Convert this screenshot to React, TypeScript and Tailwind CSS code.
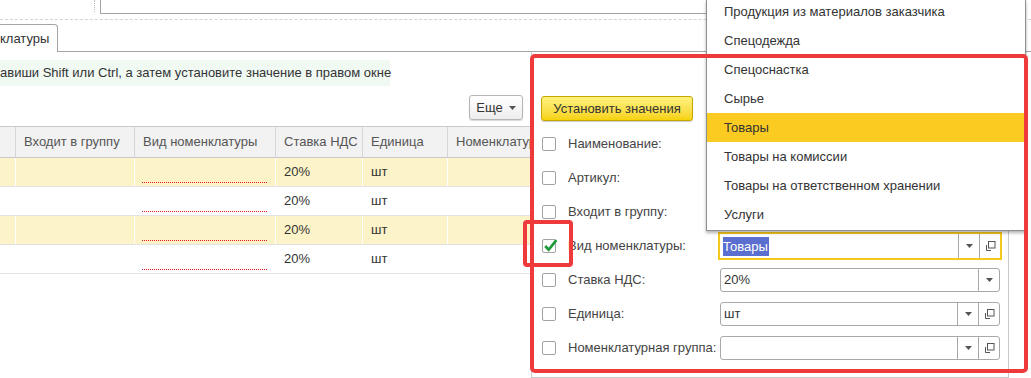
import React from 'react';

const columns = [
  { title: '', w: 'w-[16px]' },
  { title: 'Входит в группу', w: 'w-[119px]' },
  { title: 'Вид номенклатуры', w: 'w-[141px]' },
  { title: 'Ставка НДС', w: 'w-[87px]' },
  { title: 'Единица', w: 'w-[85px]' },
  { title: 'Номенклатур', w: 'flex-1' },
];

const rows = [true, false, true, false];

const listItems = [
  'Продукция из материалов заказчика',
  'Спецодежда',
  'Спецоснастка',
  'Сырье',
  'Товары',
  'Товары на комиссии',
  'Товары на ответственном хранении',
  'Услуги',
];

const Triangle = () => (
  <svg width="7" height="4" viewBox="0 0 7 4">
    <path d="M0 0h7L3.5 4z" fill="#555" />
  </svg>
);

const OpenIcon = () => (
  <svg width="11" height="11" viewBox="0 0 11 11" fill="none" stroke="#555" strokeWidth="1">
    <rect x="3.5" y="0.5" width="6.5" height="6.5" />
    <path d="M1.5 4v5.5H6" />
  </svg>
);

const Checkbox = ({ checked }: { checked?: boolean }) => (
  <div className="w-[14px] h-[14px] border border-[#a3a3a3] rounded-[2px] bg-white relative shrink-0">
    {checked && (
      <svg className="absolute -left-[1px] -top-[3px]" width="17" height="17" viewBox="0 0 16 16">
        <path d="M3 8.5l3.3 3.5L13.5 3" fill="none" stroke="#1f9a3c" strokeWidth="2.6" />
      </svg>
    )}
  </div>
);

type FieldProps = { value?: string; open?: boolean; active?: boolean };

const Field = ({ value, open = true, active }: FieldProps) => (
  <div
    className={
      active
        ? 'w-[284px] h-[28px] -ml-[2px] border-2 border-[#f7c81c] flex bg-white'
        : 'w-[280px] h-[24px] border border-[#a9a9a9] rounded-[3px] flex bg-white'
    }
  >
    <div className="flex-1 flex items-center pl-[3px] text-[#333]">
      {active ? <span className="bg-[#5a6fcf] text-white leading-[19px] pr-[1px]">{value}</span> : value}
    </div>
    <div className="w-[21px] border-l border-[#a9a9a9] flex items-center justify-center">
      <Triangle />
    </div>
    {open && (
      <div className="w-[21px] border-l border-[#a9a9a9] flex items-center justify-center">
        <OpenIcon />
      </div>
    )}
  </div>
);

const fields: { label: string; checked?: boolean; field?: FieldProps }[] = [
  { label: 'Наименование:' },
  { label: 'Артикул:' },
  { label: 'Входит в группу:' },
  { label: 'Вид номенклатуры:', checked: true, field: { value: 'Товары', active: true } },
  { label: 'Ставка НДС:', field: { value: '20%', open: false } },
  { label: 'Единица:', field: { value: 'шт' } },
  { label: 'Номенклатурная группа:', field: { value: '' } },
];

export default function App() {
  return (
    <div className="w-[1031px] h-[378px] relative overflow-hidden bg-white font-['Liberation_Sans',Arial,sans-serif] text-[13px] text-[#4a4a4a]">
      {/* top strip */}
      <div className="h-[20px] flex border-b border-dashed border-[#d4d4d4]">
        <div className="w-[95px] h-[12px] border-r border-dotted border-[#bdbdbd]" />
        <div className="ml-[5px] w-[620px] h-[14px] border-l border-b border-[#a5a5a5]" />
      </div>

      {/* tabs */}
      <div className="mt-[4px] flex h-[28px]">
        <div className="w-[58px] h-[28px] border-t border-r border-[#a5a5a5] rounded-tr-[4px] flex items-center text-[#333] bg-white">
          клатуры
        </div>
        <div className="flex-1 border-b border-[#a5a5a5]" />
      </div>

      <div className="flex">
        {/* left side */}
        <div className="w-[531px]">
          <div className="mt-[8px] w-[390px] h-[26px] bg-[#f1f9f3] flex items-center text-[#333] whitespace-nowrap">
            авиши Shift или Ctrl, а затем установите значение в правом окне
          </div>

          <div className="mt-[9px] h-[25px] flex justify-end pr-[8px]">
            <div className="w-[54px] h-[25px] border border-[#b5b5b5] rounded-[3px] bg-gradient-to-b from-white to-[#eeeeee] shadow-[0_1px_1px_rgba(0,0,0,0.15)] flex items-center justify-center gap-[6px] text-[#333]">
              Еще
              <Triangle />
            </div>
          </div>

          {/* table */}
          <div className="mt-[6px]">
            <div className="h-[32px] flex border-t border-b border-[#c9c9c9] bg-[#f2f2f2]">
              {columns.map((c, i) => (
                <div
                  key={i}
                  className={`${c.w} h-full border-r border-[#d6d6d6] flex items-center pl-[8px] text-[#555] whitespace-nowrap overflow-hidden`}
                >
                  {c.title}
                </div>
              ))}
            </div>
            {rows.map((yellow, r) => (
              <div
                key={r}
                className={`h-[29px] flex border-b border-[#e3e3e3] ${yellow ? 'bg-[#fdf3c8]' : 'bg-white'}`}
              >
                <div className="w-[16px] border-r border-white" />
                <div className="w-[119px] border-r border-white" />
                <div className="w-[141px] border-r border-white flex flex-col justify-end pb-[3px]">
                  <div className="ml-[7px] w-[125px] border-b border-dotted border-[#e8161b]" />
                </div>
                <div className="w-[87px] border-r border-white flex items-center pl-[8px] text-[#333]">20%</div>
                <div className="w-[85px] border-r border-white flex items-center pl-[8px] text-[#333]">шт</div>
                <div className="flex-1" />
              </div>
            ))}
          </div>
        </div>

        {/* right panel */}
        <div className="w-[500px] h-[326px] border-l border-[#c9c9c9]">
          <div className="w-[477px] h-[326px] border-r border-b border-[#c9c9c9] pt-[44px] pl-[9px]">
            <div className="w-[152px] h-[25px] border border-[#c8a600] rounded-[3px] bg-gradient-to-b from-[#fff27a] to-[#f6d200] shadow-[0_1px_1px_rgba(0,0,0,0.2)] flex items-center justify-center text-[#333]">
              Установить значения
            </div>
            <div className="mt-[6px]">
              {fields.map((f) => (
                <div key={f.label} className="h-[34px] flex items-center pl-[1px]">
                  <Checkbox checked={f.checked} />
                  <div className="ml-[12px] w-[152px] whitespace-nowrap text-[#444]">{f.label}</div>
                  {f.field && <Field {...f.field} />}
                </div>
              ))}
            </div>
          </div>
        </div>
      </div>

      {/* open dropdown list */}
      <div className="absolute left-[706px] top-0 w-[320px] h-[231px] bg-white border border-[#8f8f8f] border-t-0 shadow-[0_2px_3px_rgba(0,0,0,0.3)] overflow-hidden">
        <div className="-mt-[3px]">
          {listItems.map((item) => (
            <div
              key={item}
              className={`h-[29px] flex items-center pl-[17px] text-[#333] ${item === 'Товары' ? 'bg-[#fbcb22]' : ''}`}
            >
              {item}
            </div>
          ))}
        </div>
      </div>

      {/* red annotation frames */}
      <div className="absolute left-[530px] top-[54px] w-[498px] h-[319px] border-4 border-[#ee3a3a] rounded-[5px]" />
      <div className="absolute left-[523px] top-[220px] w-[50px] h-[47px] border-4 border-[#ee3a3a] rounded-[4px]" />
    </div>
  );
}
